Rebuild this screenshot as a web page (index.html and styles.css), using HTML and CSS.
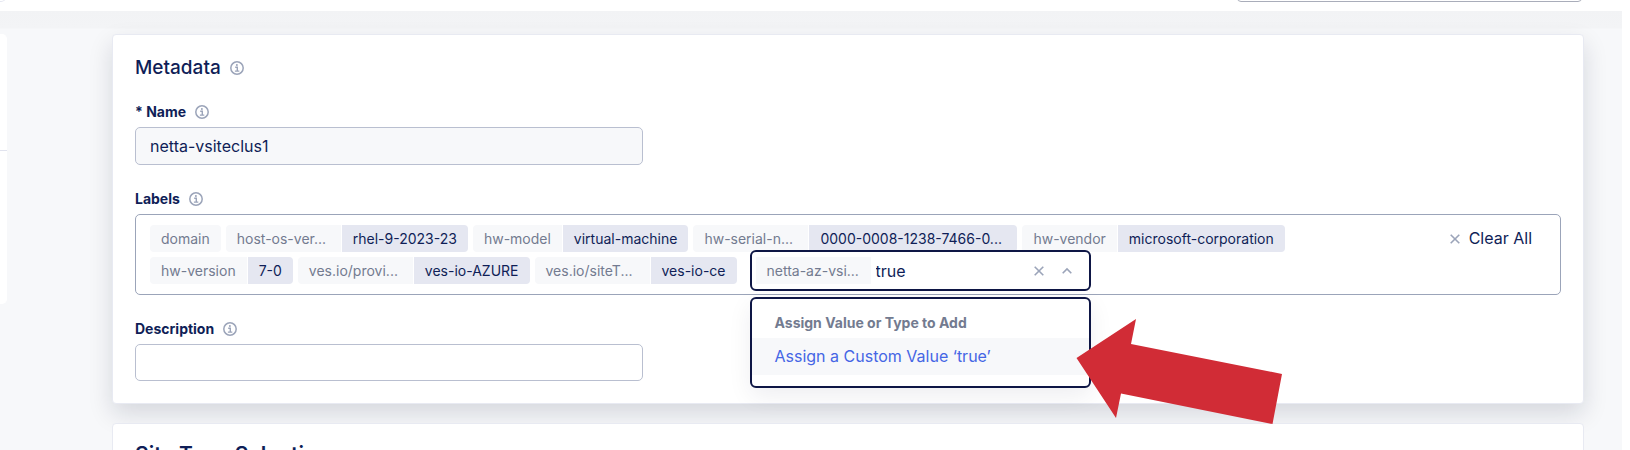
FILE: index.html
```html
<!DOCTYPE html>
<html lang="en">
<head>
<meta charset="utf-8">
<title>Metadata</title>
<link rel="stylesheet" href="styles.css">
</head>
<body>
<svg class="defs" aria-hidden="true">
  <symbol id="info" viewBox="0 0 14 14">
    <circle cx="7" cy="7" r="6.2" fill="none" stroke="currentColor" stroke-width="1.5"/>
    <circle cx="6.9" cy="3.9" r="1" fill="currentColor"/>
    <path d="M5.2 6.3H7.3V10M4.900 10.100H9.300" fill="none" stroke="currentColor" stroke-width="1.4"/>
  </symbol>
  <symbol id="cross" viewBox="0 0 10 10">
    <path d="M0.7 0.7L9.3 9.3M9.3 0.7L0.7 9.3" fill="none" stroke="currentColor" stroke-width="1.6"/>
  </symbol>
  <symbol id="caret" viewBox="0 0 10 10">
    <path d="M0.7 7.2L5 2.9L9.3 7.2" fill="none" stroke="currentColor" stroke-width="1.6"/>
  </symbol>
</svg>

<header class="topbar">
  <div class="topbar-tab"></div>
  <input class="topbar-search" type="text" aria-label="Search">
</header>

<div class="page">
  <nav class="side" aria-label="Sections">
    <div class="side-item"></div>
    <div class="side-item"></div>
  </nav>

  <main class="content">
    <section class="card card-active">
      <h2 class="card-title">Metadata <svg class="info"><use href="#info"/></svg></h2>

      <div class="field">
        <div class="field-head"><label for="name">* Name</label><svg class="info"><use href="#info"/></svg></div>
        <input class="text-input" id="name" type="text" value="netta-vsiteclus1" readonly>
      </div>

      <div class="field">
        <div class="field-head"><label for="label-value">Labels</label><svg class="info"><use href="#info"/></svg></div>
        <div class="labels-box">
          <div class="chips">
            <span class="chip"><span class="key">domain</span></span>
            <span class="chip"><span class="key key-cut">host-os-ver...</span><span class="val">rhel-9-2023-23</span></span>
            <span class="chip"><span class="key">hw-model</span><span class="val">virtual-machine</span></span>
            <span class="chip"><span class="key key-cut">hw-serial-n...</span><span class="val val-cut">0000-0008-1238-7466-0...</span></span>
            <span class="chip"><span class="key">hw-vendor</span><span class="val">microsoft-corporation</span></span>
            <span class="chip"><span class="key">hw-version</span><span class="val">7-0</span></span>
            <span class="chip"><span class="key key-cut">ves.io/provi...</span><span class="val">ves-io-AZURE</span></span>
            <span class="chip"><span class="key key-cut">ves.io/siteT...</span><span class="val">ves-io-ce</span></span>
            <div class="picker">
              <span class="key key-cut">netta-az-vsi...</span>
              <input class="picker-input" id="label-value" type="text" value="true">
              <button class="icon-button" type="button" aria-label="Clear"><svg class="glyph"><use href="#cross"/></svg></button>
              <button class="icon-button" type="button" aria-label="Close list"><svg class="glyph"><use href="#caret"/></svg></button>
              <div class="menu">
                <div class="menu-title">Assign Value or Type to Add</div>
                <button class="menu-item" type="button">Assign a Custom Value ‘true’</button>
              </div>
            </div>
          </div>
          <button class="clear-all" type="button"><svg class="glyph"><use href="#cross"/></svg>Clear All</button>
        </div>
      </div>

      <div class="field">
        <div class="field-head"><label for="description">Description</label><svg class="info"><use href="#info"/></svg></div>
        <input class="text-input text-input-empty" id="description" type="text">
      </div>
    </section>

    <section class="card">
      <h2 class="card-title card-title-strong">Site Type Selection</h2>
    </section>
  </main>
</div>

<svg class="arrow" viewBox="0 0 208 106" aria-hidden="true">
  <path d="M0.5 39L60 0L55 25L206 55L196.500 105L45 74.500L40 99Z" fill="#d12c36"/>
</svg>
</body>
</html>
```
FILE: styles.css
```css
* { box-sizing: border-box; }

body {
  margin: 0;
  height: 100vh;
  overflow: hidden;
  position: relative;
  background: #fff;
  color: #0f1e57;
  font-family: Inter, "Liberation Sans", sans-serif;
  font-size: 16px;
}

button, input { font: inherit; color: inherit; }
button { border: 0; padding: 0; background: none; cursor: pointer; }

.defs { position: absolute; width: 0; height: 0; }

.topbar {
  display: flex;
  justify-content: space-between;
  align-items: flex-end;
  height: 11px;
  padding: 0 48px 9px 0;
  background: #fff;
  overflow: hidden;
}
.topbar-tab {
  flex: none;
  width: 6px;
  height: 30px;
  border: 1px solid #e5e7f1;
  border-left: 0;
  border-radius: 0 5px 5px 0;
}
.topbar-search {
  flex: none;
  width: 345px;
  height: 36px;
  border: 1px solid #a9adba;
  border-radius: 4px;
}

.page {
  display: flex;
  align-items: flex-start;
  gap: 105px;
  margin-right: 8px;
  padding: 23px 38px 0 0;
  background: linear-gradient(#f2f3f5, #f3f4f6 17px, #f7f8fa 18px);
}

.side {
  flex: none;
  width: 7px;
  background: #fff;
  border-radius: 0 5px 5px 0;
}
.side-item { height: 116px; }
.side-item + .side-item { height: 154px; border-top: 1px solid #e1e3ee; }

.content { flex: 1; min-width: 0; }

.card {
  position: relative;
  min-height: 80px;
  margin-bottom: 19px;
  padding: 20px 22px 22px;
  border: 1px solid #e8eaf2;
  border-radius: 4px;
  background: #fff;
}
.card-active { box-shadow: 0 10px 24px rgba(15, 20, 50, 0.14); }

.card-title {
  display: flex;
  align-items: center;
  gap: 9px;
  margin: 0 0 21px;
  font-size: 19px;
  line-height: 26px;
  font-weight: 500;
}
.card-title-strong { font-size: 21px; line-height: 22px; font-weight: 600; }

.info { flex: none; width: 14px; height: 14px; color: #9ba4b9; }

.field + .field { margin-top: 24px; }
.field-head {
  display: flex;
  align-items: center;
  gap: 9px;
  height: 20px;
  margin-bottom: 5px;
  font-size: 14px;
  line-height: 20px;
  font-weight: 700;
}

.text-input {
  display: block;
  width: 100%;
  max-width: 508px;
  height: 38px;
  padding: 0 14px;
  border: 1px solid #b9bfd0;
  border-radius: 5px;
  background: #f7f8fa;
}
.text-input-empty { height: 37px; background: #fff; }

.labels-box {
  display: flex;
  align-items: flex-start;
  gap: 40px;
  padding: 10px 28px 10px 14px;
  border: 1px solid #9ba4b9;
  border-radius: 5px;
}
.chips { flex: 1; min-width: 0; display: flex; flex-wrap: wrap; gap: 5px; }
.chip { display: flex; gap: 1px; border-radius: 4px; overflow: hidden; }
.key, .val { padding: 0 11px; font-size: 14px; line-height: 27px; white-space: nowrap; }
.key { background: #f7f8fa; color: #737b90; }
.key-cut { width: 115px; flex: none; }
.val { background: #e5e7f1; }
.val-cut { width: 208px; flex: none; }

.picker {
  position: relative;
  display: flex;
  align-items: center;
  width: 341px;
  height: 41px;
  margin: -7px 0 -7px 8px;
  padding: 0 8px 0 4px;
  border: 2px solid #0e1645;
  border-radius: 6px;
  background: #fff;
}
.picker-input { flex: 1; min-width: 0; border: 0; outline: 0; padding: 0 5px; background: none; }
.icon-button { display: flex; align-items: center; justify-content: center; width: 28px; height: 28px; color: #9ba4b9; }
.glyph { flex: none; width: 10px; height: 10px; color: #9ba4b9; }

.menu {
  position: absolute;
  top: 45px;
  left: -2px;
  right: -2px;
  z-index: 1;
  padding: 12px 0 11px;
  border: 2px solid #0e1645;
  border-radius: 6px;
  background: #fff;
  box-shadow: 0 8px 24px rgba(15, 20, 60, 0.07);
}
.menu-title { padding: 0 23px 4px; color: #737b90; font-size: 14px; line-height: 23px; font-weight: 700; }
.menu-item { display: block; width: 100%; padding: 0 23px; background: #f7f8fa; color: #4566e5; line-height: 37px; text-align: left; }

.clear-all { flex: none; display: flex; align-items: center; gap: 9px; line-height: 27px; }

.arrow { position: absolute; left: 1076px; top: 319px; z-index: 2; width: 208px; height: 106px; }
```
